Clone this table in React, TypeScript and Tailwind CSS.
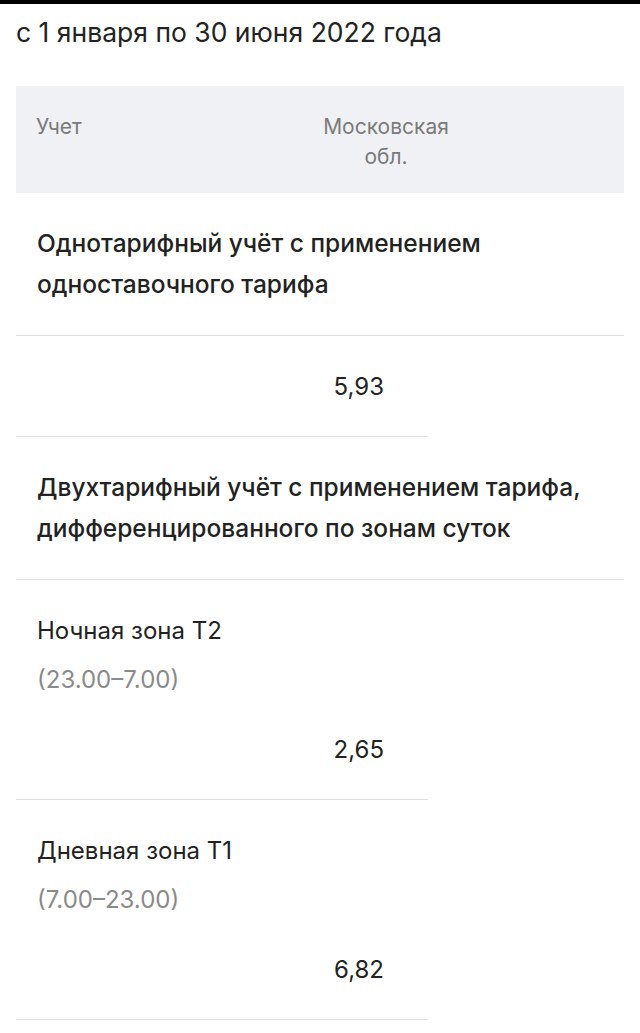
import React from 'react';

interface Zone {
  name: string;
  hours: string;
  price: string;
}

const zones: Zone[] = [
  { name: 'Ночная зона Т2', hours: '(23.00–7.00)', price: '2,65' },
  { name: 'Дневная зона Т1', hours: '(7.00–23.00)', price: '6,82' },
];

const CategoryRow: React.FC<{ text: React.ReactNode }> = ({ text }) => (
  <div className="border-b border-[#dcdfe4] px-[21px] pt-[30px] pb-[30px] text-[24.5px] font-medium leading-[41px] text-[#222]">
    {text}
  </div>
);

const PriceRow: React.FC<{ price: string; children?: React.ReactNode }> = ({ price, children }) => (
  <div className="w-[412px] border-b border-[#dcdfe4] pt-[30px] pb-[29px]">
    {children}
    <div className="flex justify-end pr-[44px] text-[24px] leading-[41px] text-[#222]">{price}</div>
  </div>
);

const App: React.FC = () => {
  return (
    <div className="min-h-[1033px] bg-white font-['Inter','Noto_Sans',sans-serif]">
      <div className="h-[4px] bg-black" />
      <h2 className="px-4 pt-[10px] text-[26.5px] font-normal leading-[36px] text-[#222]">
        с 1 января по 30 июня 2022 года
      </h2>

      <div className="mx-4 mt-[36px]">
        <div className="flex bg-[#f0f1f5] pt-[26px] pb-[21px] text-[21px] leading-[30px] text-[#7a7a7a]">
          <div className="w-[280px] pl-[20px]">Учет</div>
          <div className="w-[180px] text-center">
            Московская
            <br />
            обл.
          </div>
        </div>

        <CategoryRow text={<>Однотарифный учёт с применением<br />одноставочного тарифа</>} />
        <PriceRow price="5,93" />

        <CategoryRow text={<>Двухтарифный учёт с применением тарифа,<br />дифференцированного по зонам суток</>} />
        {zones.map(z => (
          <PriceRow key={z.name} price={z.price}>
            <div className="px-[21px] text-[24px] leading-[41px] text-[#222]">{z.name}</div>
            <div className="mt-[8px] mb-[29px] px-[21px] text-[24px] leading-[41px] text-[#8a8a8a]">{z.hours}</div>
          </PriceRow>
        ))}
      </div>
    </div>
  );
};

export default App;
